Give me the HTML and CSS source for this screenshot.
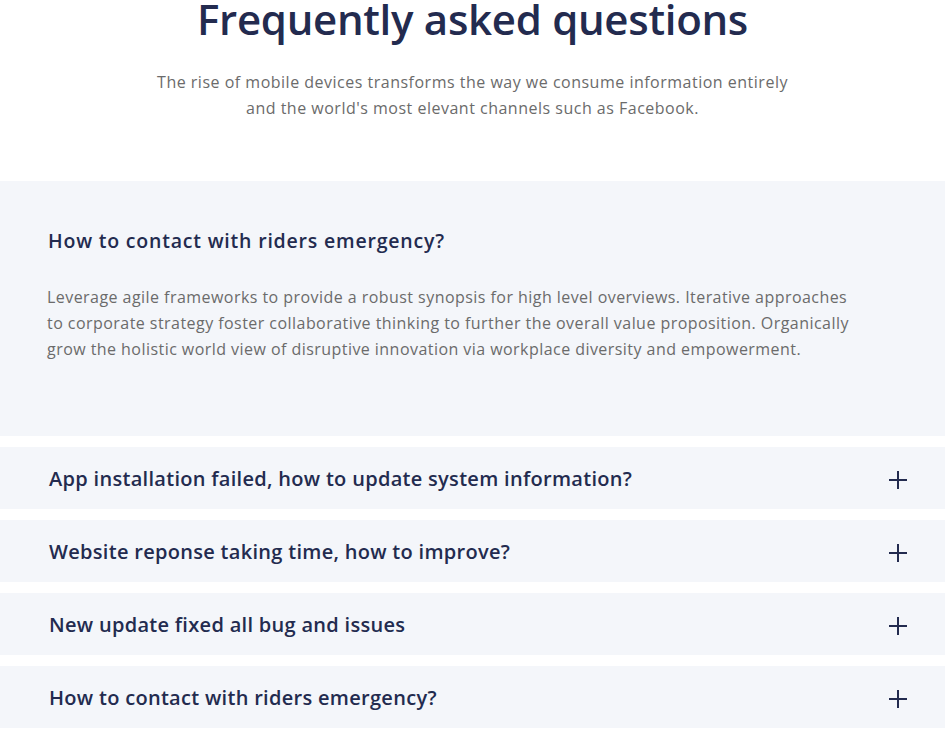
FILE: index.html
```html
<!DOCTYPE html>
<html lang="en">
<head>
<meta charset="utf-8">
<title>FAQ</title>
<link rel="stylesheet" href="styles.css">
</head>
<body>
<section class="faq">
  <header class="faq-head">
    <h1 class="faq-title">Frequently asked questions</h1>
    <p class="faq-sub">The rise of mobile devices transforms the way we consume information entirely and the world's most elevant channels such as Facebook.</p>
  </header>
  <div class="faq-list">
    <div class="faq-item open">
      <h3 class="faq-q">How to contact with riders emergency?</h3>
      <p class="faq-a">Leverage agile frameworks to provide a robust synopsis for high level overviews. Iterative approaches to corporate strategy foster collaborative thinking to further the overall value proposition. Organically grow the holistic world view of disruptive innovation via workplace diversity and empowerment.</p>
    </div>
    <div class="faq-item">
      <span class="faq-label">App installation failed, how to update system information?</span>
      <svg class="plus" viewBox="0 0 20 20" width="20" height="20"><path d="M10 1v18M1 10h18" stroke="#232b4f" stroke-width="2" fill="none"/></svg>
    </div>
    <div class="faq-item">
      <span class="faq-label">Website reponse taking time, how to improve?</span>
      <svg class="plus" viewBox="0 0 20 20" width="20" height="20"><path d="M10 1v18M1 10h18" stroke="#232b4f" stroke-width="2" fill="none"/></svg>
    </div>
    <div class="faq-item">
      <span class="faq-label">New update fixed all bug and issues</span>
      <svg class="plus" viewBox="0 0 20 20" width="20" height="20"><path d="M10 1v18M1 10h18" stroke="#232b4f" stroke-width="2" fill="none"/></svg>
    </div>
    <div class="faq-item">
      <span class="faq-label">How to contact with riders emergency?</span>
      <svg class="plus" viewBox="0 0 20 20" width="20" height="20"><path d="M10 1v18M1 10h18" stroke="#232b4f" stroke-width="2" fill="none"/></svg>
    </div>
  </div>
</section>
</body>
</html>
```
FILE: styles.css
```css
html, body {
  margin: 0;
  padding: 0;
  background: #ffffff;
}
body {
  font-family: "Open Sans", "Liberation Sans", sans-serif;
  color: #232b4f;
  overflow: hidden;
}
.faq-head {
  text-align: center;
  padding-bottom: 60px;
}
.faq-title {
  margin: -2px 0 0;
  font-size: 42px;
  line-height: 42px;
  font-weight: 600;
  color: #232b4f;
  letter-spacing: -0.3px;
}
.faq-sub {
  margin: 29px auto 0;
  max-width: 650px;
  font-size: 16px;
  line-height: 26px;
  letter-spacing: 0.5px;
  color: #6b6b6b;
}
.faq-list {
  display: flex;
  flex-direction: column;
  gap: 11px;
}
.faq-item {
  background: #f4f6fa;
  display: flex;
  align-items: center;
  justify-content: space-between;
  height: 62px;
  padding: 0 37px 0 49px;
}
.faq-item.open {
  display: block;
  height: auto;
  padding: 46px 47px 74px 47px;
}
.faq-q {
  margin: 0 0 0 1px;
  font-size: 19.5px;
  line-height: 28px;
  font-weight: 600;
  letter-spacing: 0.8px;
  color: #232b4f;
}
.faq-a {
  margin: 29px 0 0;
  max-width: 818px;
  font-size: 16px;
  line-height: 26px;
  letter-spacing: 0.45px;
  color: #6b6b6b;
}
.faq-label {
  font-size: 20px;
  font-weight: 600;
  letter-spacing: 0.3px;
  color: #232b4f;
}
.plus {
  display: block;
  margin-top: 4px;
}
```
